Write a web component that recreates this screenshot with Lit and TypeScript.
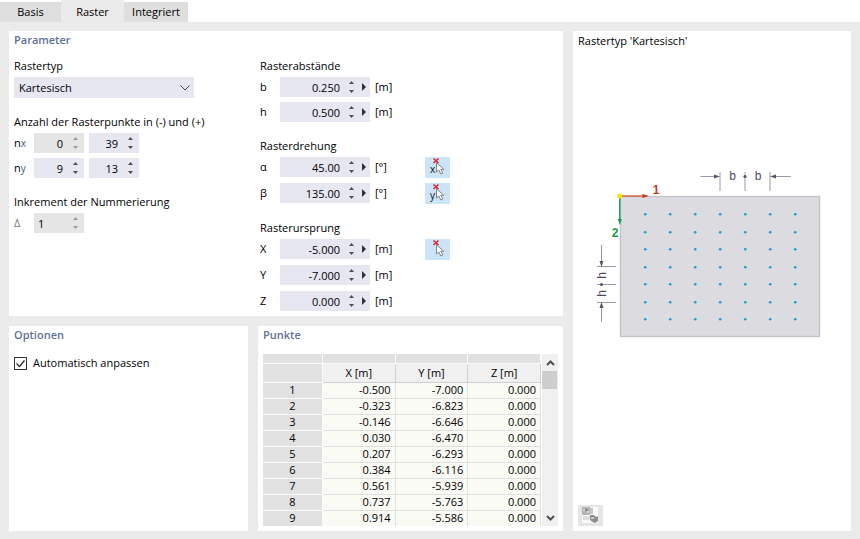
import { LitElement, html, svg, css, nothing } from "lit";
import { customElement, property, state } from "lit/decorators.js";
import { classMap } from "lit/directives/class-map.js";

const base = css`
  :host {
    font: 11px/16px "Open Sans", "Noto Sans", sans-serif;
    color: #000;
  }
  * {
    box-sizing: border-box;
  }
  button,
  input,
  select {
    font: inherit;
    color: inherit;
    border: 0;
    margin: 0;
    padding: 0;
    background: none;
    border-radius: 0;
  }
`;

@customElement("spin-field")
class SpinField extends LitElement {
  @property() value = "";
  @property() label = "";
  @property({ type: Boolean, reflect: true }) disabled = false;
  @property({ type: Boolean, reflect: true }) wide = false;
  @property({ type: Boolean, reflect: true }) start = false;

  static styles = [
    base,
    css`
      :host {
        display: flex;
        width: 50px;
        height: 20px;
        background: #e7e7f2;
      }
      :host([wide]) {
        width: 90px;
      }
      :host([disabled]) {
        background: #e5e5e5;
      }
      .value {
        flex: 1;
        min-width: 0;
        padding: 1px 0 0 4px;
        text-align: right;
        outline-offset: -1px;
      }
      :host([start]) .value {
        text-align: left;
      }
      .steps {
        display: flex;
        flex-direction: column;
        width: 21px;
        padding: 1px 0 1px 4px;
      }
      :host([wide]) .steps {
        width: 18px;
        padding-left: 5px;
      }
      .step {
        flex: 1;
        display: flex;
        justify-content: center;
        align-items: center;
      }
      .more {
        width: 12px;
        display: flex;
        align-items: center;
        justify-content: center;
      }
      svg {
        display: block;
        fill: #505050;
      }
      :host([disabled]) svg {
        fill: #9b9b9b;
      }
      .more svg {
        fill: #303030;
      }
    `,
  ];

  private step(dir: number) {
    const digits = (this.value.split(".")[1] ?? "").length;
    this.value = (Number(this.value) + dir).toFixed(digits);
  }

  render() {
    return html`
      <input
        class="value"
        aria-label=${this.label}
        .value=${this.value}
        ?disabled=${this.disabled}
        @change=${(e: Event) => (this.value = (e.target as HTMLInputElement).value)}
      />
      <span class="steps">
        <button class="step" aria-label="+" ?disabled=${this.disabled} @click=${() => this.step(1)}>
          <svg width="5" height="3"><path d="M2.5 0 5 3H0Z" /></svg>
        </button>
        <button class="step" aria-label="−" ?disabled=${this.disabled} @click=${() => this.step(-1)}>
          <svg width="5" height="3"><path d="M0 0h5L2.5 3Z" /></svg>
        </button>
      </span>
      ${this.wide
        ? html`<button class="more" aria-label="…">
            <svg width="4" height="8"><path d="M0 0 4 4 0 8Z" /></svg>
          </button>`
        : nothing}
    `;
  }
}

@customElement("pick-button")
class PickButton extends LitElement {
  @property() axis = "";

  static styles = [
    base,
    css`
      :host {
        display: block;
      }
      .pick {
        display: block;
        width: 25px;
        height: 21px;
        background: #cce4f7;
      }
      svg {
        display: block;
      }
      .axis {
        font: 10px "Open Sans", "Noto Sans", sans-serif;
        fill: #111;
      }
      .cross {
        stroke: #e0202c;
        stroke-width: 1.5;
      }
      .arrow {
        fill: #fff;
        stroke: #777;
        stroke-width: 0.9;
      }
    `,
  ];

  render() {
    return html`<button class="pick" aria-label="Auswahl ${this.axis}">
      <svg width="25" height="21">
        <path class="arrow" d="M11.5 5.5v9.500l2.300-2 2 4 1.900-.9-1.900-3.800h3Z" />
        <text class="axis" x="5" y="16">${this.axis}</text>
        <path class="cross" d="M8.500 1.500l5 4.500m0-4.500-5 4.500" />
      </svg>
    </button>`;
  }
}

@customElement("grid-diagram")
class GridDiagram extends LitElement {
  static styles = css`
    :host {
      display: block;
    }
    svg {
      display: block;
    }
    .plate {
      fill: #dcdbe0;
      stroke: #c3c3ca;
      stroke-width: 1.4;
    }
    .dot {
      fill: #1b9ad6;
    }
    .dim {
      stroke: #9a9aa6;
      fill: none;
    }
    .head {
      fill: #55556b;
    }
    .letter {
      font: 12px "Liberation Sans", sans-serif;
      fill: #4c4c60;
      text-anchor: middle;
    }
    .number {
      font: bold 12px "Liberation Sans", sans-serif;
      text-anchor: middle;
    }
    .red {
      fill: #c8391b;
    }
    .green {
      fill: #0fa14c;
    }
    .red-line {
      stroke: #cf5f44;
      stroke-width: 1.4;
    }
    .green-line {
      stroke: #0fa14c;
      stroke-width: 1.4;
    }
    .origin {
      fill: #ffe000;
    }
  `;

  render() {
    const xs = [72, 97, 122, 147, 172, 197, 222];
    const ys = [59, 77, 94, 112, 129, 147, 164];
    return html`<svg width="278" height="200" role="img" aria-label="Kartesisch">
      <rect class="plate" x="47.5" y="41.5" width="199" height="140" />
      ${ys.map((y) => xs.map((x) => svg`<circle class="dot" cx=${x + 0.2} cy=${y + 0.2} r="1.3" />`))}
      <path class="dim" d="M127.5 21.5h18M200 21.5h18M147 17v19M172 17v19M197 17v19" />
      <path class="head" d="M141 19.5l6 2-6 2zM203 19.5l-6 2 6 2z" />
      <circle class="head" cx="172" cy="21.5" r="1.6" />
      <text class="letter" x="159.5" y="25">b</text>
      <text class="letter" x="185" y="25">b</text>
      <path class="dim" d="M28.5 90v18M28.5 150v17M24 111.5h19M24 129.5h19M24 147.5h19" />
      <path class="head" d="M26.5 106l2 6 2-6zM26.5 153l2-6 2 6z" />
      <circle class="head" cx="28.5" cy="129.5" r="1.6" />
      <text class="letter" transform="translate(33 120.5) rotate(-90)">h</text>
      <text class="letter" transform="translate(33 138.5) rotate(-90)">h</text>
      <path class="green-line" d="M46.8 42v24" />
      <path class="green" d="M44.8 64h4l-2 6z" />
      <path class="red-line" d="M47 41h24" />
      <path class="red" d="M69.500 39l6.500 2-6.500 2z" />
      <circle class="origin" cx="46.700" cy="41" r="2.500" />
      <text class="number red" x="83" y="39">1</text>
      <text class="number green" x="42" y="82">2</text>
    </svg>`;
  }
}

interface Measure {
  name: string;
  value: string;
  unit: string;
  pick?: string;
}

const GROUPS: { title: string; rows: Measure[] }[] = [
  {
    title: "Rasterabstände",
    rows: [
      { name: "b", value: "0.250", unit: "[m]" },
      { name: "h", value: "0.500", unit: "[m]" },
    ],
  },
  {
    title: "Rasterdrehung",
    rows: [
      { name: "α", value: "45.00", unit: "[°]", pick: "x" },
      { name: "β", value: "135.00", unit: "[°]", pick: "y" },
    ],
  },
  {
    title: "Rasterursprung",
    rows: [
      { name: "X", value: "-5.000", unit: "[m]", pick: "" },
      { name: "Y", value: "-7.000", unit: "[m]" },
      { name: "Z", value: "0.000", unit: "[m]" },
    ],
  },
];

const POINTS = [
  ["-0.500", "-7.000"],
  ["-0.323", "-6.823"],
  ["-0.146", "-6.646"],
  ["0.030", "-6.470"],
  ["0.207", "-6.293"],
  ["0.384", "-6.116"],
  ["0.561", "-5.939"],
  ["0.737", "-5.763"],
  ["0.914", "-5.586"],
];

@customElement("app-root")
class AppRoot extends LitElement {
  @state() private tab = "Raster";

  static styles = [
    base,
    css`
      :host {
        display: flex;
        flex-direction: column;
        min-height: 100vh;
        background: #fff;
      }
      .tabs {
        display: grid;
        grid-template-columns: 61px 63px 64px;
        height: 22px;
        align-items: end;
      }
      .tab {
        height: 20px;
        background: #dedede;
      }
      .tab.active {
        height: 22px;
        padding-top: 2px;
        background: #ebebeb;
      }
      .page {
        flex: 1;
        display: grid;
        grid-template-columns: minmax(0, 1fr) 278px;
        gap: 10px;
        padding: 9px 9px 8px;
        background: #ebebeb;
      }
      .main {
        display: grid;
        grid-template-columns: 239px minmax(0, 1fr);
        grid-template-rows: auto 1fr;
        gap: 10px;
      }
      .panel {
        background: #fff;
        padding: 1px 5px 4px;
      }
      .parameter {
        grid-column: 1 / -1;
      }
      .title {
        margin: 0;
        font-size: 11px;
        line-height: 16px;
        font-weight: 600;
        color: #5f7099;
      }
      .columns {
        display: grid;
        grid-template-columns: 246px 1fr;
        margin-top: 10px;
      }
      .column {
        display: flex;
        flex-direction: column;
        gap: 16px;
      }
      .caption {
        display: block;
        margin-bottom: 3px;
      }
      .rows {
        display: flex;
        flex-direction: column;
        gap: 5px;
      }
      .row {
        display: flex;
        gap: 5px;
        height: 20px;
      }
      .row.tall {
        height: 21px;
      }
      .name {
        width: 15px;
        padding-top: 2px;
      }
      .name.dim {
        color: #777;
      }
      .sub {
        font-size: 10px;
        color: #4a5a78;
      }
      .unit {
        width: 45px;
        padding-top: 2px;
      }
      .select {
        display: grid;
        width: 180px;
        height: 21px;
        background: #e7e7f2;
      }
      .select > * {
        grid-area: 1 / 1;
      }
      .select select {
        appearance: none;
        padding: 1px 24px 0 5px;
      }
      .chevron {
        place-self: center end;
        margin-right: 4px;
        pointer-events: none;
        fill: none;
        stroke: #444;
      }
      .option {
        display: flex;
        align-items: center;
        gap: 6px;
        margin-top: 12px;
      }
      .check {
        appearance: none;
        width: 13px;
        height: 13px;
        border: 1px solid #333;
      }
      .tick {
        fill: none;
        stroke: #333;
        stroke-width: 1.4;
        pointer-events: none;
      }
      .box {
        display: grid;
      }
      .box > * {
        grid-area: 1 / 1;
      }
      .listing {
        display: flex;
        gap: 1px;
        margin-top: 11px;
      }
      table {
        width: 278px;
        table-layout: fixed;
        border-collapse: separate;
        border-spacing: 0;
      }
      th,
      td {
        font-weight: 400;
        padding: 0;
        height: 16px;
        line-height: 14px;
        vertical-align: top;
        border: solid #e0e0e0;
        border-width: 0 1px 1px 0;
      }
      td {
        background: #fafaf5;
        text-align: right;
        padding-right: 4px;
      }
      tbody tr:last-child > * {
        height: 15px;
        border-bottom: 0;
      }
      thead th {
        background: #f0f0f0;
        height: 19px;
        line-height: 18px;
        border-color: #d0d0d0;
      }
      thead .strip th {
        height: 10px;
        line-height: 9px;
        background: #e1e1e1;
        border-color: #fafafa;
      }
      thead th.corner,
      tbody th {
        background: #e1e1e1;
        border-color: #fafafa;
      }
      .index {
        width: 60px;
      }
      .bar {
        display: flex;
        flex-direction: column;
        width: 16px;
        background: #f0f0f0;
      }
      .bar button {
        height: 17px;
        display: grid;
        place-items: center;
      }
      .bar svg {
        fill: none;
        stroke: #505050;
        stroke-width: 2;
      }
      .thumb {
        height: 18px;
        margin: 0 1px auto 0;
        background: #cdcdcd;
      }
      .preview {
        display: flex;
        flex-direction: column;
        padding: 2px 5px 5px;
      }
      .drawing {
        align-self: center;
        margin: 106px -5px 0;
      }
      .shot {
        width: 25px;
        height: 21px;
        margin-top: auto;
        background: #e6e6e6;
      }
      .shot svg {
        display: block;
      }
    `,
  ];

  private measure(m: Measure, tall: boolean) {
    return html`<div class=${classMap({ row: true, tall })}>
      <span class="name">${m.name}</span>
      <spin-field wide label=${m.name} value=${m.value}></spin-field>
      <span class="unit">${m.unit}</span>
      ${m.pick === undefined ? nothing : html`<pick-button axis=${m.pick}></pick-button>`}
    </div>`;
  }

  render() {
    return html`
      <nav class="tabs" role="tablist">
        ${["Basis", "Raster", "Integriert"].map(
          (t) => html`<button
            role="tab"
            aria-selected=${t === this.tab}
            class=${classMap({ tab: true, active: t === this.tab })}
            @click=${() => (this.tab = t)}
          >
            ${t}
          </button>`
        )}
      </nav>
      <div class="page">
        <div class="main">
          <section class="panel parameter">
            <h2 class="title">Parameter</h2>
            <div class="columns">
              <div class="column">
                <div>
                  <label class="caption" for="type">Rastertyp</label>
                  <div class="select">
                    <select id="type">
                      <option>Kartesisch</option>
                    </select>
                    <svg class="chevron" width="10" height="6"><path d="M.5.5 5 5 9.500.500" /></svg>
                  </div>
                </div>
                <div>
                  <span class="caption">Anzahl der Rasterpunkte in (-) und (+)</span>
                  <div class="rows">
                    <div class="row">
                      <span class="name">n<span class="sub">x</span></span>
                      <spin-field label="nx (-)" value="0" disabled></spin-field>
                      <spin-field label="nx (+)" value="39"></spin-field>
                    </div>
                    <div class="row">
                      <span class="name">n<span class="sub">y</span></span>
                      <spin-field label="ny (-)" value="9"></spin-field>
                      <spin-field label="ny (+)" value="13"></spin-field>
                    </div>
                  </div>
                </div>
                <div>
                  <span class="caption">Inkrement der Nummerierung</span>
                  <div class="row">
                    <span class="name dim">Δ</span>
                    <spin-field label="Δ" value="1" disabled start></spin-field>
                  </div>
                </div>
              </div>
              <div class="column">
                ${GROUPS.map(
                  (g, i) => html`<div>
                    <span class="caption">${g.title}</span>
                    <div class="rows">${g.rows.map((m) => this.measure(m, i > 0))}</div>
                  </div>`
                )}
              </div>
            </div>
          </section>

          <section class="panel">
            <h2 class="title">Optionen</h2>
            <label class="option">
              <span class="box">
                <input class="check" type="checkbox" checked />
                <svg class="tick" width="13" height="13"><path d="M2.500 6.500 5.500 9.500 10.500 3.500" /></svg>
              </span>
              Automatisch anpassen
            </label>
          </section>

          <section class="panel">
            <h2 class="title">Punkte</h2>
            <div class="listing">
              <table>
                <colgroup>
                  <col class="index" />
                  <col />
                  <col />
                  <col />
                </colgroup>
                <thead>
                  <tr class="strip">
                    <th></th>
                    <th></th>
                    <th></th>
                    <th></th>
                  </tr>
                  <tr>
                    <th class="corner"></th>
                    <th>X [m]</th>
                    <th>Y [m]</th>
                    <th>Z [m]</th>
                  </tr>
                </thead>
                <tbody>
                  ${POINTS.map(
                    ([x, y], i) => html`<tr>
                      <th>${i + 1}</th>
                      <td>${x}</td>
                      <td>${y}</td>
                      <td>0.000</td>
                    </tr>`
                  )}
                </tbody>
              </table>
              <div class="bar">
                <button aria-label="Nach oben">
                  <svg width="9" height="6"><path d="M1 5l3.500-3.500L8 5" /></svg>
                </button>
                <div class="thumb"></div>
                <button aria-label="Nach unten">
                  <svg width="9" height="6"><path d="M1 1l3.500 3.500L8 1" /></svg>
                </button>
              </div>
            </div>
          </section>
        </div>

        <section class="panel preview">
          <span>Rastertyp 'Kartesisch'</span>
          <grid-diagram class="drawing"></grid-diagram>
          <button class="shot" aria-label="Bild">
            <svg width="25" height="21">
              <path fill="#fafafa" d="M4 2h16v16H4z" />
              <path fill="#b4b4b4" d="M4 2h8v8H4z" />
              <path fill="#c4c4c4" d="M12 3h3v6h-3z" />
              <path fill="#d6d6d6" d="M5 4h3v2H5zM9 6h2v2H9z" />
              <path fill="#dedede" d="M5 11h7v4H5z" />
              <path fill="#8c8c8c" d="M7 4h3v2H7zM12 10h4l2 2 2-1v5l-3 2-4-2-1-2z" />
              <path fill="#c8c8c8" d="M13 12h3v2h-3z" />
            </svg>
          </button>
        </section>
      </div>
    `;
  }
}
